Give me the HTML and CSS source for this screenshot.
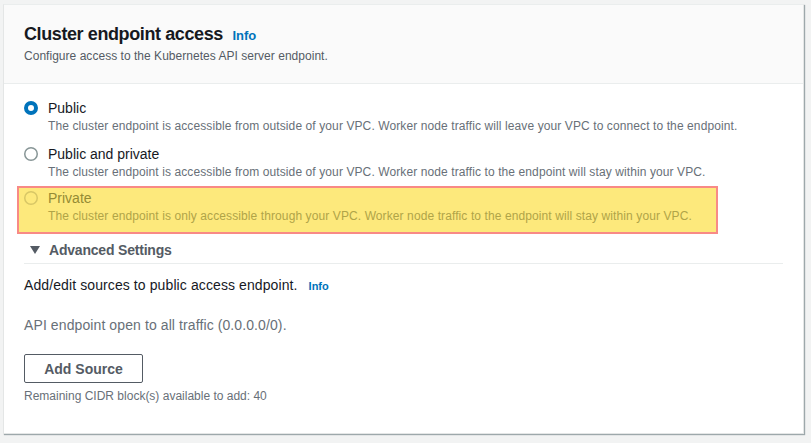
FILE: index.html
```html
<!DOCTYPE html>
<html>
<head>
<meta charset="utf-8">
<link rel="stylesheet" href="styles.css">
</head>
<body>
<div class="card">
  <div class="card-header">
    <h2 class="title">Cluster endpoint access <a class="info info-title">Info</a></h2>
    <p class="subtitle">Configure access to the Kubernetes API server endpoint.</p>
  </div>
  <div class="card-body">
    <div class="radio-group">
      <div class="radio-item">
        <svg class="radio" width="14" height="14" viewBox="0 0 14 14"><circle cx="7" cy="7" r="5" fill="#fff" stroke="#0073bb" stroke-width="4"/></svg>
        <div class="radio-text">
          <div class="radio-label">Public</div>
          <div class="radio-desc">The cluster endpoint is accessible from outside of your VPC. Worker node traffic will leave your VPC to connect to the endpoint.</div>
        </div>
      </div>
      <div class="radio-item">
        <svg class="radio" width="14" height="14" viewBox="0 0 14 14"><circle cx="7" cy="7" r="6.25" fill="#fff" stroke="#879596" stroke-width="1.5"/></svg>
        <div class="radio-text">
          <div class="radio-label">Public and private</div>
          <div class="radio-desc">The cluster endpoint is accessible from outside of your VPC. Worker node traffic to the endpoint will stay within your VPC.</div>
        </div>
      </div>
      <div class="radio-item highlight">
        <svg class="radio" width="14" height="14" viewBox="0 0 14 14"><circle cx="7" cy="7" r="6.25" fill="none" stroke="#d8c766" stroke-width="1.5"/></svg>
        <div class="radio-text">
          <div class="radio-label">Private</div>
          <div class="radio-desc">The cluster endpoint is only accessible through your VPC. Worker node traffic to the endpoint will stay within your VPC.</div>
        </div>
      </div>
    </div>
    <div class="expander">
      <svg class="caret" width="10" height="8" viewBox="0 0 10 8"><polygon points="0,0 10,0 5,8" fill="#545b64"/></svg>
      <span>Advanced Settings</span>
    </div>
    <div class="sources-line">Add/edit sources to public access endpoint. <a class="info info-small">Info</a></div>
    <div class="open-line">API endpoint open to all traffic (0.0.0.0/0).</div>
    <button class="btn">Add Source</button>
    <div class="remaining">Remaining CIDR block(s) available to add: 40</div>
  </div>
</div>
</body>
</html>
```

FILE: styles.css
```css
* { box-sizing: border-box; }
body {
  margin: 0;
  background: #f2f3f3;
  font-family: "Liberation Sans", Arial, sans-serif;
  color: #16191f;
  width: 811px;
  height: 443px;
  overflow: hidden;
}
.card {
  margin: 4px 0 0 3px;
  width: 801px;
  height: 430px;
  background: #fff;
  border: 1px solid #e4e6e6;
  border-top-color: #eaeded;
  box-shadow: 1px 1px 1px 0 rgba(0, 28, 36, 0.35);
}
.card-header {
  background: #fafafa;
  border-bottom: 1px solid #eaeded;
  padding: 18px 20px 17px;
  height: 79px;
}
.title {
  margin: 0;
  font-size: 18px;
  line-height: 22px;
  font-weight: 700;
  color: #16191f;
  letter-spacing: -0.4px;
}
.info {
  color: #0073bb;
  font-weight: 700;
  text-decoration: none;
  letter-spacing: 0;
}
.info-title {
  font-size: 13px;
  margin-left: 5px;
}
.subtitle {
  margin: 0;
  font-size: 12px;
  line-height: 18px;
  color: #545b64;
  letter-spacing: 0.03px;
}
.card-body {
  padding: 14px 20px 0;
}
.radio-group {
  display: flex;
  flex-direction: column;
  gap: 10px;
}
.radio-item {
  display: flex;
  gap: 10px;
  align-items: flex-start;
}
.radio {
  flex: none;
  margin-top: 3px;
}
.radio-label {
  font-size: 14px;
  line-height: 20px;
  color: #16191f;
}
.radio-desc {
  font-size: 12px;
  line-height: 16px;
  color: #687078;
  letter-spacing: 0.1px;
}
.highlight {
  margin: -4px 0 0 -7px;
  width: 701px;
  padding: 0 0 8px 5px;
  background: #fde97c;
  border: 2px solid #f88a86;
}
.highlight .radio-label { color: #958b35; }
.highlight .radio-desc { color: #b0a448; }
.expander {
  display: flex;
  align-items: center;
  gap: 9px;
  margin-top: 6px;
  padding: 0 0 4px 6px;
  height: 24px;
  border-bottom: 1px solid #eaeded;
  font-size: 14px;
  line-height: 20px;
  font-weight: 700;
  color: #545b64;
  letter-spacing: -0.2px;
}
.sources-line {
  margin-top: 11px;
  font-size: 14px;
  line-height: 20px;
  color: #16191f;
  letter-spacing: 0.1px;
}
.info-small {
  font-size: 11px;
  margin-left: 7px;
}
.open-line {
  margin-top: 19px;
  font-size: 14px;
  line-height: 20px;
  color: #687078;
  letter-spacing: 0.1px;
}
.btn {
  display: block;
  margin-top: 19px;
  width: 119px;
  height: 29px;
  background: #fff;
  border: 1px solid #545b64;
  border-radius: 2px;
  font-family: inherit;
  font-size: 14px;
  font-weight: 700;
  color: #545b64;
  padding: 0;
}
.remaining {
  margin-top: 5px;
  font-size: 12px;
  line-height: 16px;
  color: #687078;
}
```
